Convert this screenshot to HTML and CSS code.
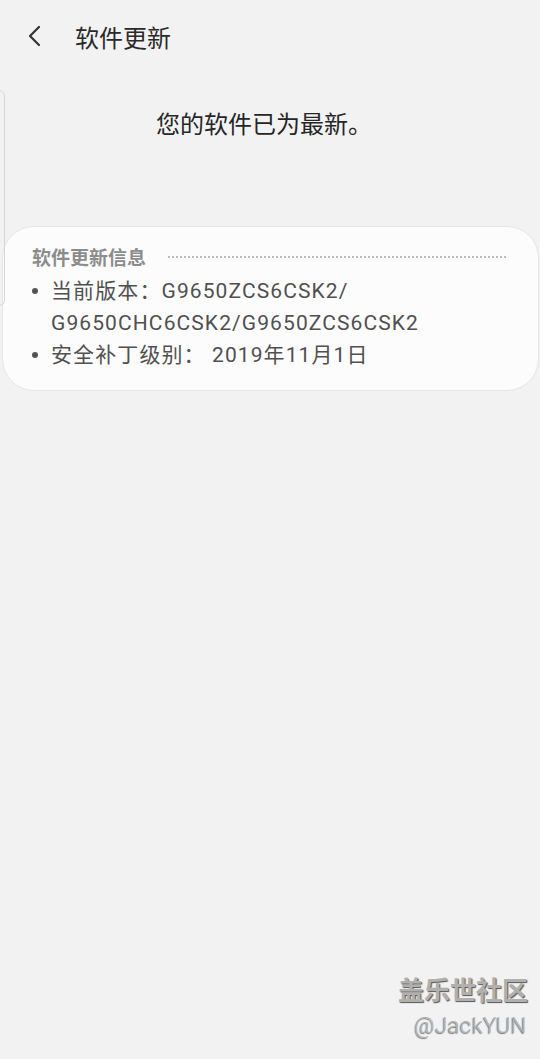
FILE: index.html
```html
<!DOCTYPE html>
<html lang="zh-CN">
<head>
    <meta charset="UTF-8">
    <meta name="viewport" content="width=device-width, initial-scale=1.0">
    <title>软件更新</title>
    <link rel="stylesheet" href="styles.css">
</head>
<body>
    <div id="screen">
        <!-- Header -->
        <header class="app-bar">
            <button class="back-btn" aria-label="返回">
                <svg width="16" height="24" viewBox="0 0 16 24">
                    <path d="M12 3 L3 12 L12 21" fill="none" stroke="#333" stroke-width="2.2" stroke-linecap="round" stroke-linejoin="round"/>
                </svg>
            </button>
            <h1>软件更新</h1>
        </header>

        <p class="status">您的软件已为最新。</p>

        <!-- Info card -->
        <div class="info-card">
            <div class="info-head">
                <span class="info-title">软件更新信息</span>
                <span class="info-rule"></span>
            </div>
            <ul class="info-list">
                <li>当前版本：G9650ZCS6CSK2/<br>G9650CHC6CSK2/G9650ZCS6CSK2</li>
                <li>安全补丁级别： 2019年11月1日</li>
            </ul>
        </div>

        <!-- Edge of a panel peeking in from the left -->
        <div class="edge-panel"></div>

        <!-- Watermark -->
        <div class="watermark">
            <span class="wm-site">盖乐世社区</span>
            <span class="wm-user">@JackYUN</span>
        </div>
    </div>
</body>
</html>
```

FILE: styles.css
```css
* {
    box-sizing: border-box;
    margin: 0;
    padding: 0;
}

body {
    font-family: Roboto, "Noto Sans CJK SC", sans-serif;
    background: #f2f2f2;
    color: #252525;
}

#screen {
    position: relative;
    width: 540px;
    height: 1059px;
    overflow: hidden;
    padding-top: 17px;
}

/* Header */
.app-bar {
    display: flex;
    align-items: center;
    height: 38px;
    padding-left: 27px;
}

.back-btn {
    background: none;
    border: none;
    width: 16px;
    height: 24px;
    display: flex;
    align-items: center;
    margin-right: 32px;
}

.app-bar h1 {
    font-size: 24px;
    font-weight: 400;
    color: #2a2a2a;
}

.status {
    text-align: center;
    font-size: 24px;
    color: #262626;
    margin-top: 50px;
    padding-right: 12px;
}

/* Info card */
.info-card {
    margin: 86px 1px 0 2px;
    background: #fcfcfc;
    border: 1px solid #e6e6e6;
    border-radius: 32px;
    padding: 15px 32px 19px 29px;
}

.info-head {
    display: flex;
    align-items: center;
    height: 28px;
}

.info-title {
    font-size: 19px;
    font-weight: 700;
    color: #8c8c8c;
}

.info-rule {
    flex: 1;
    margin-left: 22px;
    border-top: 2px dotted #bdbdbd;
    margin-top: 2px;
}

.info-list {
    list-style: none;
    margin-top: 5px;
}

.info-list li {
    position: relative;
    padding-left: 19px;
    font-size: 21px;
    letter-spacing: 1.1px;
    line-height: 32px;
    color: #505050;
}

.info-list li::before {
    content: "";
    position: absolute;
    left: 0;
    top: 13px;
    width: 6px;
    height: 6px;
    border-radius: 50%;
    background: #555;
}

.edge-panel {
    position: absolute;
    left: -20px;
    top: 90px;
    width: 25px;
    height: 216px;
    border: 1px solid #d6d6d6;
    border-radius: 0 6px 6px 0;
}

/* Watermark */
.watermark {
    position: absolute;
    right: 12px;
    top: 974px;
    display: flex;
    flex-direction: column;
    align-items: flex-end;
    color: #b0b0b0;
}

.wm-site {
    font-size: 26px;
    font-weight: 700;
    line-height: 34px;
    text-shadow: 1px 1px 1px #555;
}

.wm-user {
    font-size: 22px;
    font-weight: 300;
    line-height: 30px;
    margin-top: 3px;
    margin-right: 1px;
    letter-spacing: 0.5px;
    text-shadow: -1px 1px 1px #777;
}
```
